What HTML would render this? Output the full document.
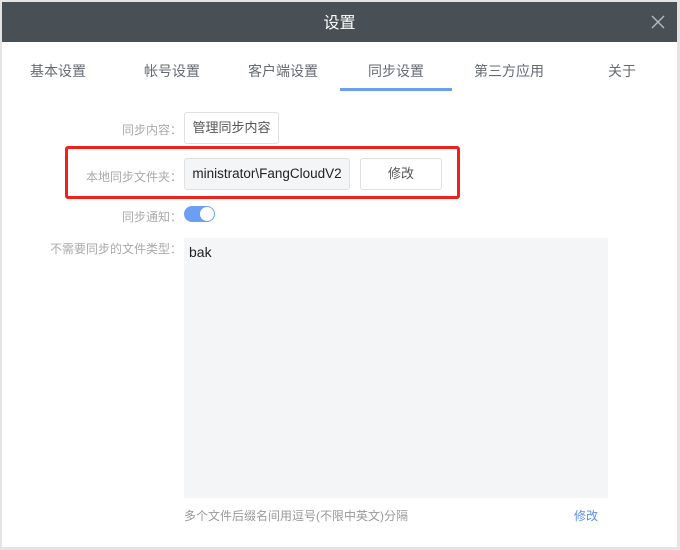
<!DOCTYPE html><html><head><style>
body{margin:0;width:680px;height:550px;background:#e4e4e4;font-family:"Liberation Sans","Noto Sans CJK SC",sans-serif;position:relative;overflow:hidden}
.win{position:absolute;left:2px;top:2px;width:675px;height:545px;background:#fff}
.hd{height:40px;background:#495055;color:#fff;font-size:16px;text-align:center;line-height:44px;position:relative}
.x{position:absolute;right:12px;top:13px;width:14px;height:14px}
.tab{position:absolute;top:59px;font-size:14px;color:#666a73}
.a{position:absolute;font-size:12px}
.lbl{color:#aaa;text-align:right;width:180px;left:0}
.btn{position:absolute;border:1px solid #e0e0e0;border-radius:3px;background:#fff;font-size:13px;color:#555;text-align:center;box-sizing:border-box}
</style></head><body><div class="win">
<div class="hd">设置<svg class="x" viewBox="0 0 14 14"><path d="M1 1L13 13M13 1L1 13" stroke="#b9bdc0" stroke-width="1.3"/></svg></div>
<div class="tab" style="left:28px">基本设置</div>
<div class="tab" style="left:142px">帐号设置</div>
<div class="tab" style="left:246px">客户端设置</div>
<div class="tab" style="left:366px">同步设置</div>
<div class="tab" style="left:472px">第三方应用</div>
<div class="tab" style="left:606px">关于</div>
<div style="position:absolute;left:338px;top:86px;width:112px;height:3px;background:#6a9ff4"></div>
<div class="a lbl" style="top:119px">同步内容：</div>
<div class="btn" style="left:182px;top:110px;width:95px;height:32px;line-height:30px">管理同步内容</div>
<div style="position:absolute;left:63px;top:144px;width:389px;height:47px;border:3px solid #f0201a;border-radius:3px"></div>
<div class="a lbl" style="top:166px">本地同步文件夹：</div>
<div class="btn" style="left:182px;top:156px;width:166px;height:32px;line-height:30px;background:#f4f5f7;color:#222;font-size:13.5px">ministrator\FangCloudV2</div>
<div class="btn" style="left:358px;top:156px;width:82px;height:32px;line-height:30px">修改</div>
<div class="a lbl" style="top:206px">同步通知：</div>
<div style="position:absolute;left:182px;top:204px;width:31px;height:16px;border-radius:8px;background:#6a9ff4"><div style="position:absolute;right:1px;top:1px;width:14px;height:14px;border-radius:50%;background:#fff"></div></div>
<div class="a lbl" style="top:238px">不需要同步的文件类型：</div>
<div style="position:absolute;left:182px;top:236px;width:424px;height:260px;background:#f4f5f7;font-size:14px;color:#222;padding:6px 5px;box-sizing:border-box">bak</div>
<div class="a" style="left:182px;top:505px;color:#999">多个文件后缀名间用逗号(不限中英文)分隔</div>
<div class="a" style="left:572px;top:505px;color:#5a8ef0">修改</div>
</div></body></html>
